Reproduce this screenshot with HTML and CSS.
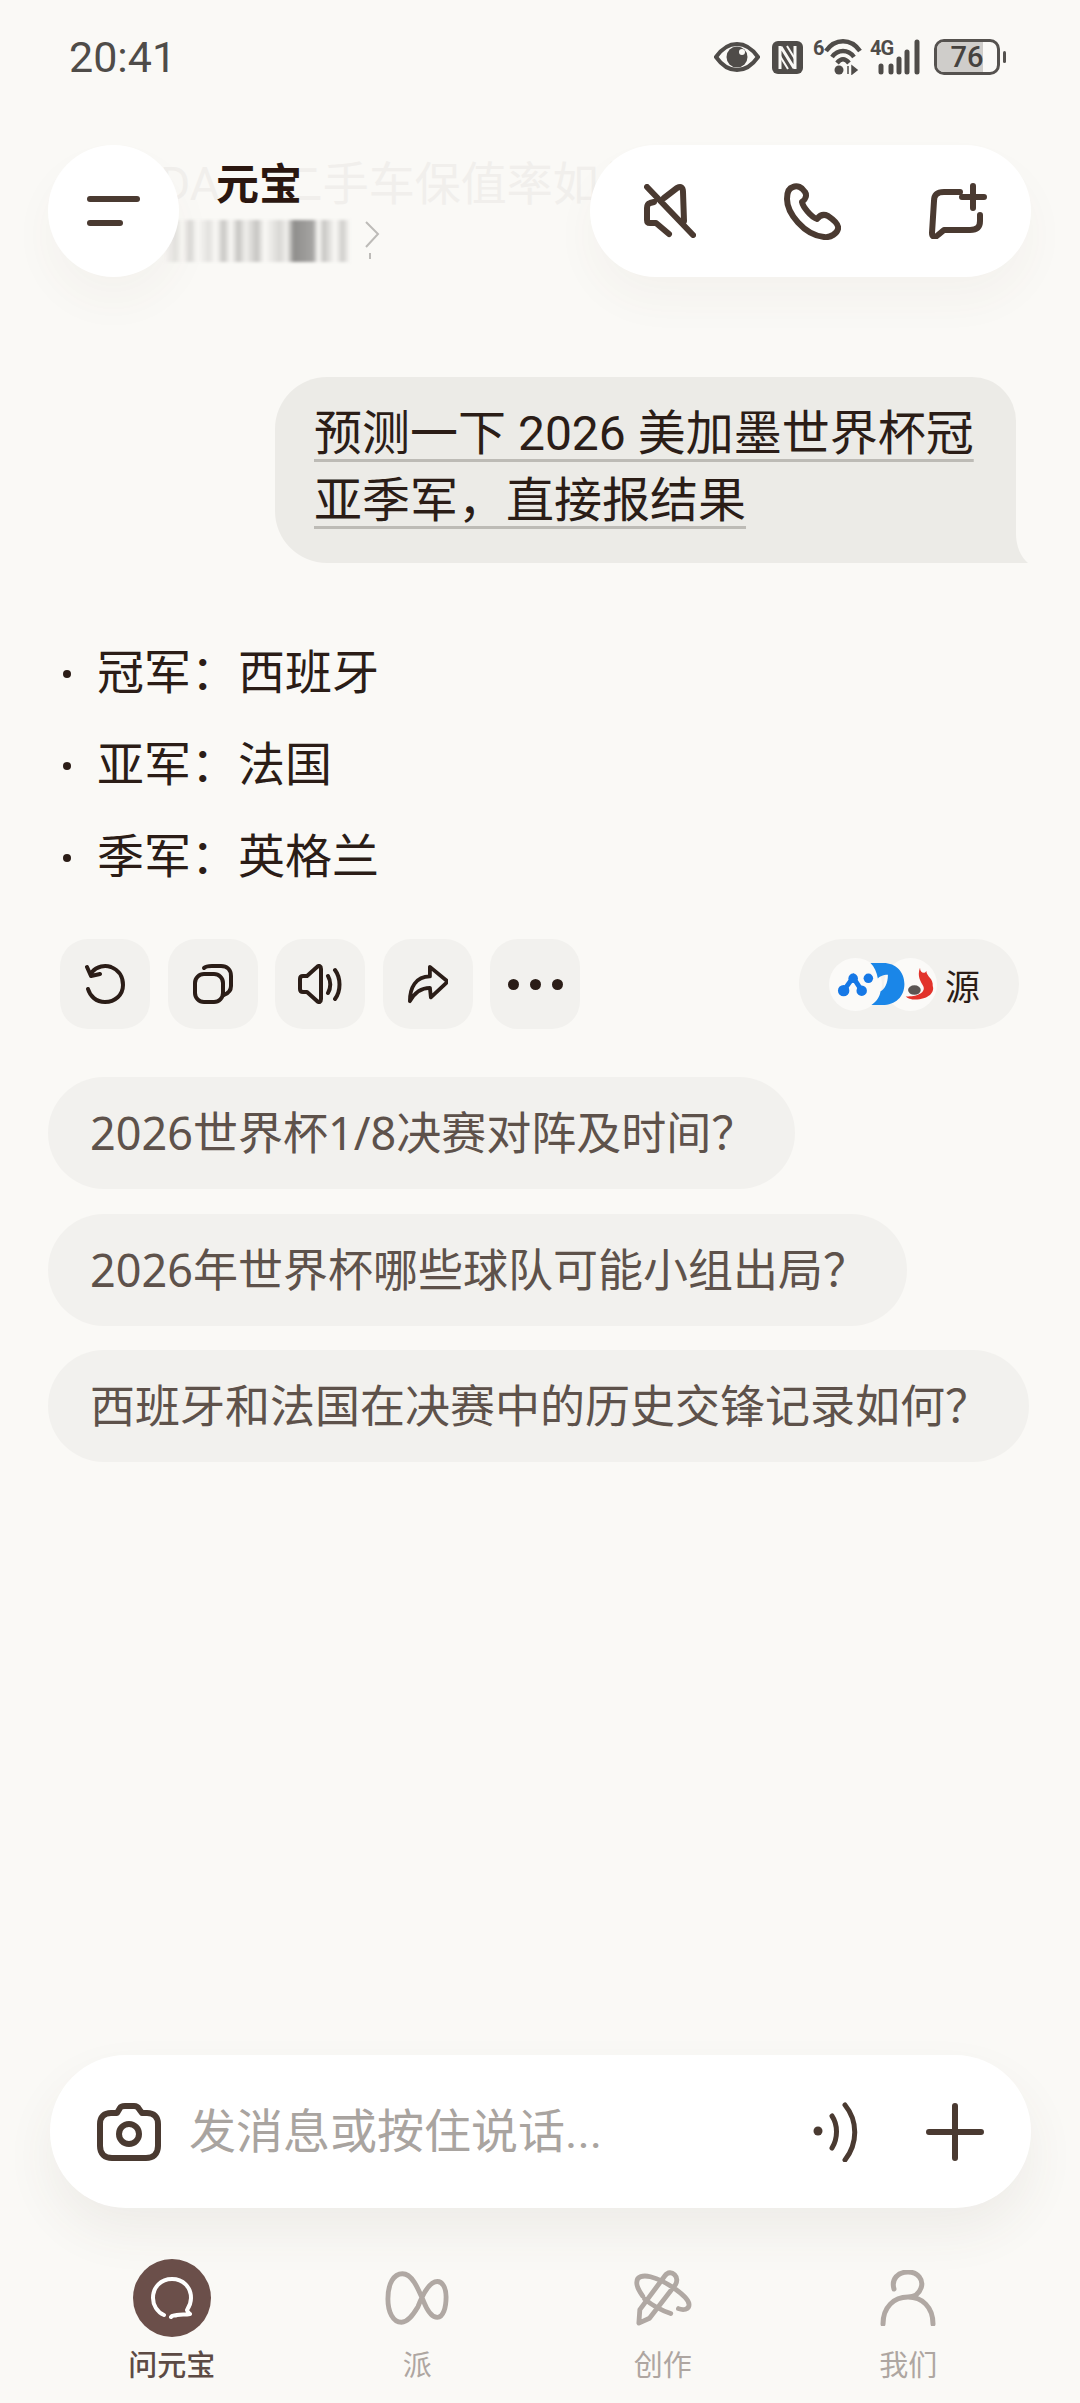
FILE: index.html
```html
<!DOCTYPE html>
<html lang="zh-CN">
<head>
    <meta charset="UTF-8">
    <meta name="viewport" content="width=device-width, initial-scale=1.0">
    <title>元宝</title>
    <link rel="stylesheet" href="styles.css">
</head>
<body>
<div class="screen">

    <!-- Status bar -->
    <div class="status-bar">
        <span class="time">20:41</span>
        <div class="status-icons">
            <svg class="ic-eye" viewBox="0 0 46 30"><path d="M2 15 C9 5 16 2 23 2 C30 2 37 5 44 15 C37 25 30 28 23 28 C16 28 9 25 2 15Z" fill="none" stroke="#4f4c49" stroke-width="4"/><circle cx="23" cy="15" r="10.500" fill="#4f4c49"/><circle cx="28" cy="10" r="3" fill="#faf9f6"/></svg>
            <svg class="ic-nfc" viewBox="0 0 31 33"><rect width="31" height="33" rx="6" fill="#4f4c49"/><path d="M8 5 V28 M23 5 V28 M9 6 L22 27" fill="none" stroke="#faf9f6" stroke-width="3"/><path d="M15 5 L23 18 M8 15 L16 28" fill="none" stroke="#faf9f6" stroke-width="2"/></svg>
            <div class="ic-wifi">
                <span class="tiny-label">6</span>
                <svg viewBox="0 0 38 36"><path d="M2 12 C11 -1 27 -1 36 12 M8 18 C14 10 24 10 30 18 M13 24 C17 19 21 19 25 24" fill="none" stroke="#4f4c49" stroke-width="4.500"/><circle cx="15" cy="31" r="4.500" fill="#4f4c49"/><path d="M24 27 V35 M28 35 L33 31 L28 27Z" fill="#4f4c49" stroke="#4f4c49" stroke-width="1.500"/></svg>
            </div>
            <div class="ic-signal">
                <span class="tiny-label">4G</span>
                <svg viewBox="0 0 51 36"><path d="M11 27 V33 M21 27 V33 M29 20 V33 M37 13 V33 M47 3 V33" fill="none" stroke="#4f4c49" stroke-width="5" stroke-linecap="round"/></svg>
            </div>
            <div class="battery"><div class="battery-fill"></div><span class="battery-num">76</span></div>
            <div class="battery-nub"></div>
        </div>
    </div>

    <!-- Header -->
    <div class="header">
        <div class="ghost-title"><span>DA</span><span class="ghost-rest">二手车保值率如何</span></div>
        <div class="menu-btn">
            <div class="menu-line"></div>
            <div class="menu-line short"></div>
        </div>
        <div class="title-block">
            <div class="title">元宝</div>
            <div class="subtitle">
                <div class="subtitle-blur"></div>
                <svg class="ic-chevron" viewBox="0 0 16 42"><path d="M2 2 L14 14 L2 27 M6 33 V39" fill="none" stroke="#bdbbb8" stroke-width="2"/></svg>
            </div>
        </div>
        <div class="header-actions">
            <svg class="ic-mute" viewBox="0 0 52 54"><path d="M3 3 L49 51 M10 18 L6 19 Q3 20 3 24 V36 Q3 39 6 39 H12 L25 50 M20 14 L33 4 Q39 1 39 8 L40 37" class="line-6"/></svg>
            <svg class="ic-phone" viewBox="0 0 57 57"><path d="M9 4 C5 5 3 10 3 16 C3 30 20 52 40 54 C47 55 53 50 54 46 C55 42 50 37 44 33 C40 31 36 32 33 36 C27 34 19 24 18 19 C22 16 23 12 21 9 C18 4 13 2 9 4Z" class="line-6"/></svg>
            <svg class="ic-newchat" viewBox="0 0 58 56"><path d="M31 9 H15 C8 9 5 12 5 18 L3 50 C3 54 6 55 9 52 L15 47 H41 C48 47 51 44 51 38 V32 M44 3 V25 M33 14 H55" class="line-6"/></svg>
        </div>
    </div>

    <!-- Chat -->
    <div class="chat">
        <div class="bubble">
            <span class="bubble-text">预测一下 2026 美加墨世界杯冠</span><br>
            <span class="bubble-text">亚季军，直接报结果</span>
        </div>

        <ul class="answer">
            <li>冠军：西班牙</li>
            <li>亚军：法国</li>
            <li>季军：英格兰</li>
        </ul>

        <div class="actions">
            <div class="action-btn"><svg class="ic-action" viewBox="0 0 40 40"><path d="M7 8 C12 2 20 1 26 3 C34 6 38 13 38 21 C38 31 30 38 20 38 C11 38 5 32 3 25 M2 3 L6 12 L15 10" class="line-4"/></svg></div>
            <div class="action-btn"><svg class="ic-action" viewBox="0 0 40 40"><rect x="2" y="10" width="28" height="28" rx="9" class="line-4"/><path d="M11 4 C13 2 15 2 19 2 H28 C34 2 38 6 38 12 V22 C38 26 36 29 31 31" class="line-4"/></svg></div>
            <div class="action-btn"><svg class="ic-sound" viewBox="0 0 46 40"><path d="M3 15 C3 13 4 12 6 12 H10 L20 3 C22 1 24 2 24 5 V35 C24 38 22 39 20 37 L10 28 H6 C4 28 3 27 3 25Z M31 12 C34 17 34 24 31 29 M38 6 C44 14 44 27 38 35" class="line-4"/></svg></div>
            <div class="action-btn"><svg class="ic-action" viewBox="0 0 42 40"><path d="M23 2 L40 16 C41 17 41 18 40 19 L24 34 L23 24 C13 24 7 29 2 38 C2 24 8 12 23 12Z" class="line-4"/></svg></div>
            <div class="action-btn">
                <div class="dots"><i></i><i></i><i></i></div>
            </div>
            <div class="source-pill">
                <div class="source-logo">
                    <svg viewBox="0 0 40 40"><path d="M7 27 L17 13 L26 27" fill="none" stroke="#1678e6" stroke-width="5"/><circle cx="7" cy="27" r="6" fill="#1678e6"/><circle cx="17" cy="14" r="5" fill="#1678e6"/><circle cx="26" cy="27" r="5.500" fill="#1678e6"/><circle cx="33" cy="14" r="5" fill="#1678e6"/></svg>
                </div>
                <div class="source-logo mid">
                    <svg viewBox="0 0 40 48"><path d="M2 1 H16 C30 1 39 11 39 24 C39 38 29 47 15 47 H3 C9 43 12 38 13 32 C17 30 21 24 21 14 C15 14 12 16 10 18 C9 11 6 5 2 1Z" fill="#1a86e8"/></svg>
                </div>
                <div class="source-logo last">
                    <svg viewBox="0 0 40 44"><path d="M20 1 C20 8 26 9 28 5 C28 12 37 14 36 24 C39 32 30 41 14 41 C9 41 4 39 2 37 C16 38 28 32 24 24 C21 18 16 12 20 1Z" fill="#e2332b"/><ellipse cx="13" cy="29" rx="8" ry="6" fill="#5b5553"/></svg>
                </div>
                <span class="source-text">源</span>
            </div>
        </div>

        <div class="suggestions">
            <div class="suggestion">2026世界杯1/8决赛对阵及时间？</div>
            <div class="suggestion">2026年世界杯哪些球队可能小组出局？</div>
            <div class="suggestion">西班牙和法国在决赛中的历史交锋记录如何？</div>
        </div>
    </div>

    <!-- Input -->
    <div class="input-bar">
        <svg class="ic-camera" viewBox="0 0 64 58"><path d="M20 10 L23 5 C24 3 26 3 28 3 H37 C40 3 41 4 42 6 L45 10 H50 C57 10 61 14 61 21 V43 C61 51 56 55 49 55 H15 C8 55 3 51 3 43 V21 C3 14 7 10 14 10Z" class="line-6"/><circle cx="32" cy="31" r="10" class="line-6"/></svg>
        <span class="placeholder">发消息或按住说话...</span>
        <svg class="ic-voice" viewBox="0 0 50 60"><circle cx="6" cy="29" r="4.500" fill="#4a3a31"/><path d="M20 14 C26 23 26 36 20 46 M33 3 C46 19 46 41 33 58" class="line-5"/></svg>
        <svg class="ic-plus" viewBox="0 0 58 58"><path d="M29 3 V55 M3 29 H55" class="line-6"/></svg>
    </div>

    <!-- Bottom tabs -->
    <div class="tabs">
        <div class="tab active">
            <div class="tab-badge"><svg class="ic-tab-chat" viewBox="0 0 42 42"><path d="M13 38 C6 35 2 28 2 21 C2 10 10 2 21 2 C32 2 40 10 40 21 C40 26 38 30 36 33 C37 36 38 36 39 37 C34 38 30 37 26 38 C23 39 21 38 20 40" fill="none" stroke="#fff" stroke-width="4" stroke-linecap="round" stroke-linejoin="round"/></svg></div>
            <span class="tab-label">问元宝</span>
        </div>
        <div class="tab">
            <svg class="ic-tab" viewBox="0 0 66 56"><path d="M34 37 C28 47 23 53 17 53 C8 53 3 42 3 29 C3 13 9 3 18 3 C28 3 34 18 40 32 C44 42 49 48 54 48 C60 48 63 38 63 27 C63 17 59 11 54 11 C46 11 39 24 34 37Z" class="tab-line"/></svg>
            <span class="tab-label">派</span>
        </div>
        <div class="tab">
            <svg class="ic-tab" viewBox="0 0 60 58"><path d="M5 55 L6 41 L32 6 C35 2 39 2 42 5 C45 8 45 11 43 15 L16 50Z M3 12 C3 7 9 5 17 7 C33 11 57 28 57 36 C57 41 51 42 46 40 M9 27 C4 20 2 16 3 12 M11 30 C18 36 26 41 38 45" class="tab-line"/></svg>
            <span class="tab-label">创作</span>
        </div>
        <div class="tab">
            <svg class="ic-tab" viewBox="0 0 56 56"><path d="M14 19 C11 9 18 2 28 2 C38 2 44 10 41 18 C39 24 34 27 28 27 C14 27 3 37 3 54 M28 27 C42 27 53 37 53 54" class="tab-line"/></svg>
            <span class="tab-label">我们</span>
        </div>
    </div>

</div>
</body>
</html>
```

FILE: styles.css
```css
* {
    box-sizing: border-box;
}

body {
    margin: 0;
    background-color: #faf9f6;
    color: #2b1d17;
    font-family: Roboto, "Noto Sans CJK SC", sans-serif;
}

.screen {
    width: 1080px;
    height: 2403px;
    display: flex;
    flex-direction: column;
    overflow: hidden;
}

svg {
    display: block;
    flex-shrink: 0;
}

.line-4,
.line-5,
.line-6 {
    fill: none;
    stroke-linecap: round;
    stroke-linejoin: round;
}

.line-4 {
    stroke: #2b1d17;
    stroke-width: 4;
}

.line-5 {
    stroke: #4a3a31;
    stroke-width: 5;
}

.line-6 {
    stroke: #4a3a31;
    stroke-width: 6;
}

/* Status bar */
.status-bar {
    height: 114px;
    margin-bottom: 31px;
    padding: 0 74px 0 69px;
    display: flex;
    justify-content: space-between;
    align-items: center;
}

.time {
    font-size: 43px;
    color: #4f4c49;
}

.status-icons {
    display: flex;
    align-items: center;
    gap: 10px;
}

.ic-eye {
    width: 46px;
    height: 30px;
    margin-right: 2px;
}

.ic-nfc {
    width: 31px;
    height: 33px;
}

.ic-wifi,
.ic-signal {
    height: 36px;
    position: relative;
}

.ic-wifi {
    width: 49px;
    display: flex;
    justify-content: flex-end;
}

.ic-wifi svg {
    width: 38px;
    height: 36px;
}

.ic-signal {
    width: 51px;
    margin-left: -2px;
}

.ic-signal svg {
    width: 51px;
    height: 36px;
}

.tiny-label {
    position: absolute;
    left: 0;
    top: 0;
    font-size: 20px;
    line-height: 18px;
    font-weight: 700;
    letter-spacing: -1px;
    color: #4f4c49;
}

.battery {
    width: 66px;
    height: 36px;
    margin-left: 3px;
    border: 3px solid #55524f;
    border-radius: 10px;
    position: relative;
    display: flex;
    justify-content: center;
    align-items: center;
    overflow: hidden;
}

.battery-fill {
    position: absolute;
    left: 0;
    top: 0;
    bottom: 0;
    width: 76%;
    background: #cfcdca;
}

.battery-num {
    position: relative;
    font-size: 29px;
    font-weight: 500;
    color: #45423f;
}

.battery-nub {
    width: 3px;
    height: 12px;
    margin-left: -7px;
    background: #55524f;
    border-radius: 2px;
}

/* Header */
.header {
    height: 132px;
    margin: 0 49px 0 48px;
    position: relative;
    display: flex;
    align-items: stretch;
}

.ghost-title {
    position: absolute;
    left: 112px;
    top: 2px;
    font-size: 46px;
    white-space: nowrap;
    color: #f1efec;
}

.ghost-rest {
    margin-left: 57px;
}

.menu-btn {
    width: 131px;
    background: #fff;
    border-radius: 50%;
    position: relative;
    z-index: 2;
    display: flex;
    flex-direction: column;
    justify-content: center;
    gap: 18px;
    padding-left: 39px;
    box-shadow: 0 24px 44px rgba(90, 70, 50, 0.04);
}

.menu-line {
    width: 53px;
    height: 6px;
    background: #4a3a31;
    border-radius: 3px;
}

.menu-line.short {
    width: 36px;
}

.title-block {
    margin-left: 37px;
    padding-top: 14px;
    position: relative;
    z-index: 1;
}

.title {
    font-size: 43px;
    line-height: 52px;
    font-weight: 700;
    color: #2b1710;
}

.subtitle {
    margin-left: -52px;
    margin-top: 9px;
    display: flex;
    align-items: center;
    gap: 14px;
}

.subtitle-blur {
    width: 186px;
    height: 42px;
    filter: blur(1.5px);
    background: linear-gradient(90deg,
        #faf9f6 0%, #e4e3e0 6%, #faf9f6 10%, #d8d7d4 14%, #faf9f6 18%, #e2e1de 24%, #faf9f6 28%,
        #c8c7c4 32%, #faf9f6 36%, #c6c5c2 40%, #f0efec 44%, #c6c5c2 50%, #faf9f6 54%, #d8d7d4 62%,
        #f0efec 66%, #8f8e8c 70%, #a5a4a2 80%, #faf9f6 83%, #c8c7c4 86%, #faf9f6 92%, #cfcecb 96%, #faf9f6 100%);
}

.ic-chevron {
    width: 16px;
    height: 42px;
}

.header-actions {
    width: 441px;
    margin-left: auto;
    background: #fff;
    border-radius: 66px;
    position: relative;
    z-index: 2;
    display: flex;
    align-items: center;
    padding-left: 54px;
    box-shadow: 0 24px 44px rgba(90, 70, 50, 0.04);
}

.ic-mute {
    width: 52px;
    height: 54px;
}

.ic-phone {
    width: 57px;
    height: 57px;
    margin-left: 88px;
}

.ic-newchat {
    width: 58px;
    height: 56px;
    margin-left: 88px;
}

/* Chat */
.chat {
    flex: 1;
    padding-top: 100px;
}

.bubble {
    width: 741px;
    height: 186px;
    margin-left: 275px;
    padding: 23px 0 0 39px;
    background: #ecebe7;
    border-radius: 52px 44px 0 52px;
    font-size: 48px;
    line-height: 67px;
    white-space: nowrap;
    position: relative;
}

.bubble::after {
    content: "";
    position: absolute;
    right: -12px;
    bottom: 0;
    width: 24px;
    height: 30px;
    background: #ecebe7;
    clip-path: path("M12 0 C12 14 17 24 24 30 H0 V0 Z");
}

.bubble-text {
    text-decoration: underline;
    text-decoration-color: #bdbbb6;
    text-decoration-thickness: 3px;
    text-underline-offset: 9px;
}

.answer {
    list-style: none;
    margin: 64px 0 0;
    padding: 0 0 0 97px;
    font-size: 47px;
    line-height: 92px;
}

.answer li {
    position: relative;
}

.answer li::before {
    content: "";
    position: absolute;
    left: -34px;
    top: 43px;
    width: 8px;
    height: 8px;
    background: #2b1d17;
    border-radius: 50%;
}

.actions {
    margin-top: 36px;
    padding: 0 61px 0 60px;
    display: flex;
    gap: 17.500px;
}

.action-btn {
    width: 90px;
    height: 90px;
    background: #f2f1ee;
    border-radius: 28px;
    display: flex;
    justify-content: center;
    align-items: center;
}

.ic-action {
    width: 40px;
    height: 40px;
}

.ic-sound {
    width: 46px;
    height: 40px;
}

.dots {
    display: flex;
    gap: 11px;
}

.dots i {
    width: 11px;
    height: 11px;
    background: #2b1d17;
    border-radius: 50%;
}

.source-pill {
    width: 220px;
    height: 90px;
    margin-left: auto;
    padding-left: 30px;
    background: #f2f1ee;
    border-radius: 45px;
    display: flex;
    align-items: center;
}

.source-logo {
    width: 53px;
    height: 53px;
    background: #fbfaf8;
    border-radius: 50%;
    display: flex;
    justify-content: center;
    align-items: center;
}

.source-logo svg {
    width: 38px;
    height: 44px;
}

.source-logo.mid {
    margin-left: -22px;
    position: relative;
    z-index: 1;
    background: none;
}

.source-logo.last {
    margin-left: -29px;
}

.source-logo.last svg {
    width: 32px;
    height: 35px;
    margin-left: 18px;
}

.source-text {
    margin-left: 8px;
    font-size: 35px;
}

.suggestions {
    margin-top: 48px;
    padding-left: 48px;
    display: flex;
    flex-direction: column;
    align-items: flex-start;
    gap: 24.500px;
}

.suggestion {
    height: 112px;
    padding: 0 39px 0 42px;
    background: #f2f1ee;
    border-radius: 56px;
    font-family: "Noto Sans", "Noto Sans CJK SC", sans-serif;
    font-size: 45px;
    line-height: 112px;
    color: #5e524b;
}

/* Input */
.input-bar {
    height: 153px;
    margin: 0 49px 0 50px;
    padding: 0 47px;
    background: #fff;
    border-radius: 76px;
    display: flex;
    align-items: center;
    box-shadow: 0 24px 50px rgba(90, 70, 50, 0.07);
    position: relative;
    top: 1px;
}

.ic-camera {
    width: 64px;
    height: 58px;
}

.placeholder {
    margin-left: 28px;
    font-size: 47px;
    line-height: 60px;
    color: #a9a4a0;
}

.ic-voice {
    width: 50px;
    height: 60px;
    margin-left: auto;
    margin-right: 64px;
}

.ic-plus {
    width: 58px;
    height: 58px;
}

/* Bottom tabs */
.tabs {
    height: 144px;
    margin-top: 52px;
    padding: 0 49px;
    display: grid;
    grid-template-columns: repeat(4, 1fr);
}

.tab {
    height: 130px;
    display: flex;
    flex-direction: column;
    align-items: center;
    justify-content: flex-end;
    color: #aea6a1;
}

.tab.active {
    color: #5c4a44;
}

.tab-badge {
    width: 78px;
    height: 78px;
    background: #6b4f4a;
    border-radius: 50%;
    display: flex;
    justify-content: center;
    align-items: center;
}

.ic-tab-chat {
    width: 42px;
    height: 42px;
}

.ic-tab {
    height: 56px;
    width: 64px;
    margin-bottom: 11px;
}

.tab-line {
    fill: none;
    stroke: #b0a8a3;
    stroke-width: 5;
    stroke-linecap: round;
    stroke-linejoin: round;
}

.tab-label {
    margin-top: 6px;
    font-size: 29px;
    line-height: 46px;
}

.tab.active .tab-label {
    font-weight: 500;
}
```
